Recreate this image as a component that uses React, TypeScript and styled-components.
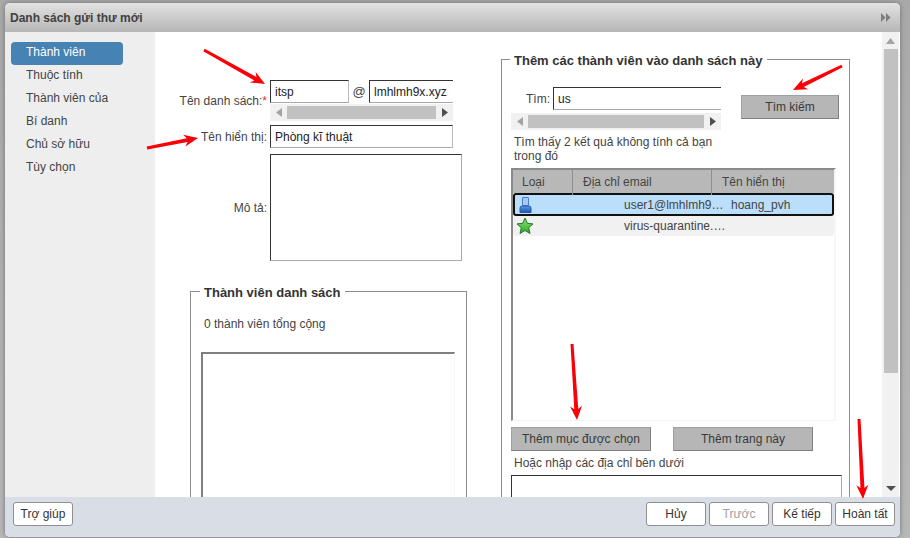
import React from "react";
import styled, { createGlobalStyle } from "styled-components";

const Global = createGlobalStyle`
  html, body { margin: 0; padding: 0; height: 538px; overflow: hidden; background: #b3b3b3; }
  #root { height: 538px; }
  * { box-sizing: border-box; }
  body { font-family: "Liberation Sans", Arial, sans-serif; font-size: 12px; color: #333; }
`;

const Page = styled.div`
  position: relative;
  width: 910px;
  height: 538px;
  padding: 3px 10px 1px 5px;
  overflow: hidden;
  background: linear-gradient(#a9a9a9, #b8b8b8);
`;
const Dialog = styled.div`
  display: flex;
  flex-direction: column;
  height: 534px;
  border-radius: 5px;
  overflow: hidden;
  background: #fff;
  box-shadow: 0 0 5px #6e6e6e;
`;
const TitleBar = styled.div`
  flex: none;
  height: 29px;
  display: flex;
  align-items: center;
  justify-content: space-between;
  padding: 0 9px 0 5px;
  background: linear-gradient(#e2e2e2, #b6b6b6);
  font-weight: bold;
  color: #404040;
`;
const Body = styled.div`
  flex: 1;
  min-height: 0;
  display: flex;
`;
const Sidebar = styled.nav`
  flex: none;
  width: 150px;
  padding: 10px 0 0 6px;
  background: #eeeeee;
`;
const NavItem = styled.div<{ $active?: boolean }>`
  width: 112px;
  height: 23px;
  line-height: 21px;
  padding-left: 15px;
  border-radius: 4px;
  background: ${(p) => (p.$active ? "#4682b4" : "transparent")};
  color: ${(p) => (p.$active ? "#fff" : "#444")};
`;
const Main = styled.main`
  flex: 1;
  min-width: 0;
  display: flex;
  overflow: hidden;
`;
const LeftCol = styled.section`
  flex: none;
  width: 312px;
  padding-top: 48px;
`;
const FormRow = styled.div<{ $gap?: number }>`
  display: flex;
  align-items: center;
  margin-top: ${(p) => p.$gap ?? 0}px;
`;
const Label = styled.label`
  flex: none;
  width: 112px;
  margin-right: 3px;
  text-align: right;
  color: #444;
`;
const Req = styled.span`
  color: #d33;
`;
const Fields = styled.div`
  width: 183px;
`;
const FieldLine = styled.div`
  display: flex;
  align-items: center;
`;
const Input = styled.div<{ $w: number; $open?: boolean }>`
  flex: none;
  width: ${(p) => p.$w}px;
  height: 23px;
  line-height: 23px;
  padding: 0 4px;
  border: 1px solid #333;
  border-color: #333 #bbb #aaa #333;
  ${(p) => (p.$open ? "border-right: none;" : "")}
  color: #222;
  white-space: nowrap;
  overflow: hidden;
  background: #fff;
`;
const At = styled.span`
  flex: none;
  width: 20px;
  text-align: center;
  font-size: 13px;
  color: #444;
`;
const TextArea = styled.div<{ $w: number; $h: number; $top?: number }>`
  flex: none;
  width: ${(p) => p.$w}px;
  height: ${(p) => p.$h}px;
  margin-top: ${(p) => p.$top ?? 0}px;
  border: 1px solid #333;
  border-color: #333 #aaa #aaa #333;
  background: #fff;
`;
const HScroll = styled.div<{ $w: number; $top: number }>`
  width: ${(p) => p.$w}px;
  height: 17px;
  margin-top: ${(p) => p.$top}px;
  display: flex;
  align-items: center;
  background: #f1f1f1;
`;
const HEnd = styled.div`
  flex: none;
  width: 17px;
  display: flex;
  justify-content: center;
`;
const HThumb = styled.div`
  flex: 1;
  height: 13px;
  background: #c1c1c1;
`;
const Fieldset = styled.fieldset`
  margin: 0;
  padding: 0;
  border: 1px solid #8c8c8c;
  min-width: 0;
`;
const LeftFieldset = styled(Fieldset)`
  margin: 22px 0 0 35px;
  width: 277px;
  height: 320px;
  padding: 0 11px 0 10px;
`;
const Legend = styled.legend`
  margin-left: -1px;
  padding: 0 4px;
  height: 16px;
  font-size: 13px;
  font-weight: bold;
  line-height: 19px;
  color: #333;
`;
const Total = styled.div`
  margin: 18px 0 0 3px;
  line-height: 15px;
  color: #444;
`;
const MemberBox = styled.div`
  margin-top: 20px;
  height: 200px;
  border-top: 2px solid #808080;
  border-left: 2px solid #808080;
  border-right: 1px solid #f7f7f7;
`;
const RightCol = styled.section`
  flex: none;
  width: 349px;
  margin-left: 34px;
  padding-top: 19px;
`;
const RightFieldset = styled(Fieldset)`
  height: 480px;
  padding: 0 0 0 9px;
`;
const SearchArea = styled.div`
  display: flex;
  align-items: flex-start;
`;
const SearchCol = styled.div`
  flex: none;
  width: 210px;
  padding-top: 20px;
`;
const SearchLabel = styled.label`
  flex: none;
  width: 42px;
  padding: 0 4px 0 15px;
  color: #444;
`;
const SearchBtnWrap = styled.div`
  margin: 28px 0 0 20px;
`;
const GreyButton = styled.div<{ $w: number }>`
  width: ${(p) => p.$w}px;
  height: 24px;
  line-height: 22px;
  text-align: center;
  background: #b6b6b6;
  border: 1px solid #8a8a8a;
  border-color: #a0a0a0 #808080 #808080 #a0a0a0;
  color: #3a3a3a;
`;
const Found = styled.p`
  margin: 5px 0 0 3px;
  width: 205px;
  line-height: 14px;
  color: #444;
`;
const List = styled.div`
  margin-top: 5px;
  width: 325px;
  height: 253px;
  border-top: 2px solid #8a8a8a;
  border-left: 2px solid #8a8a8a;
  border-right: 2px solid #f7f7f7;
  border-bottom: 1px solid #f3f3f3;
`;
const HeadRow = styled.div`
  display: grid;
  grid-template-columns: 59px 139px 123px;
  height: 23px;
  background: #b8b8b8;
  color: #444;
`;
const HeadCell = styled.div<{ $sep?: boolean }>`
  line-height: 25px;
  padding-left: ${(p) => (p.$sep ? 10 : 9)}px;
  border-left: ${(p) => (p.$sep ? "1px solid #8f8f8f" : "none")};
`;
const Row = styled.div<{ $selected?: boolean }>`
  display: grid;
  grid-template-columns: 59px 150px 112px;
  align-items: center;
  height: ${(p) => (p.$selected ? 23 : 20)}px;
  border-radius: 3px;
  background: ${(p) => (p.$selected ? "#bbdefb" : "#f1f1f1")};
  box-shadow: ${(p) => (p.$selected ? "inset 0 0 0 2px #111" : "none")};
  color: #444;
`;
const IconCell = styled.div`
  padding-left: 1px;
  display: flex;
  align-items: center;
`;
const EmailCell = styled.div`
  padding-left: 52px;
  white-space: nowrap;
`;
const NameCell = styled.div`
  padding-left: 9px;
  white-space: nowrap;
`;
const ActionRow = styled.div`
  display: flex;
  gap: 22px;
  margin-top: 6px;
`;
const OrText = styled.div`
  margin: 5px 0 0 3px;
  line-height: 14px;
  color: #444;
`;
const VScroll = styled.div`
  flex: none;
  width: 17px;
  margin-left: 32px;
  display: flex;
  flex-direction: column;
  align-items: center;
  background: #f1f1f1;
`;
const VEnd = styled.div`
  flex: none;
  height: 17px;
  display: flex;
  align-items: center;
  justify-content: center;
`;
const VThumb = styled.div`
  flex: none;
  width: 14px;
  height: 324px;
  background: #c1c1c1;
`;
const VSpacer = styled.div`
  flex: 1;
`;
const Footer = styled.footer`
  flex: none;
  height: 40px;
  display: flex;
  justify-content: space-between;
  padding: 5px 5px 0 8px;
  background: #d9dde5;
`;
const FooterGroup = styled.div`
  display: flex;
  gap: 3px;
`;
const FooterBtn = styled.div<{ $disabled?: boolean }>`
  width: 60px;
  height: 24px;
  line-height: 22px;
  text-align: center;
  background: #fff;
  border: 1px solid #8f8f8f;
  border-radius: 3px;
  color: ${(p) => (p.$disabled ? "#a0a0a0" : "#333")};
`;
const Arrows = styled.svg`
  position: absolute;
  left: 0;
  top: 0;
  width: 910px;
  height: 538px;
  pointer-events: none;
`;

const Tri = ({ dir, color = "#555" }: { dir: "l" | "r" | "u" | "d"; color?: string }) => {
  const pts = { l: "7,0 1,4.5 7,9", r: "1,0 7,4.5 1,9", u: "0,7 4.5,1 9,7", d: "0,1 10,1 5,6" }[dir];
  const vert = dir === "u" || dir === "d";
  return (
    <svg width={vert ? 10 : 8} height={vert ? 8 : 9} viewBox={vert ? "0 0 10 8" : "0 0 8 9"}>
      <polygon points={pts} fill={color} />
    </svg>
  );
};

const Scroll = ({ w, top }: { w: number; top: number }) => (
  <HScroll $w={w} $top={top}>
    <HEnd><Tri dir="l" color="#a3a3a3" /></HEnd>
    <HThumb />
    <HEnd><Tri dir="r" color="#505050" /></HEnd>
  </HScroll>
);

const UserIcon = () => (
  <svg width="13" height="16" viewBox="0 0 13 16" style={{ marginLeft: 5 }}>
    <defs>
      <linearGradient id="ub" x1="0" y1="0" x2="0" y2="1">
        <stop offset="0" stopColor="#5f98e6" />
        <stop offset="1" stopColor="#1c55b0" />
      </linearGradient>
    </defs>
    <rect x="3.5" y="0.5" width="6" height="8" rx="0.5" fill="#a9c8f3" stroke="#4a7fcc" />
    <path d="M1 15.5V11Q1 9 3 9H10Q12 9 12 11V15.5Z" fill="url(#ub)" stroke="#2a5aa8" />
  </svg>
);

const StarIcon = () => (
  <svg width="18" height="18" viewBox="0 0 18 18" style={{ marginLeft: 2 }}>
    <defs>
      <linearGradient id="sg" x1="0" y1="0" x2="0" y2="1">
        <stop offset="0" stopColor="#8fe37a" />
        <stop offset="1" stopColor="#2fa52a" />
      </linearGradient>
    </defs>
    <polygon
      points="9,1 11.3,6.3 17,6.9 12.7,10.7 14,16.5 9,13.5 4,16.5 5.3,10.7 1,6.9 6.7,6.3"
      fill="url(#sg)"
      stroke="#1f7a22"
      strokeWidth="1"
      strokeLinejoin="round"
    />
  </svg>
);

const Arrow = ({ x1, y1, x2, y2 }: { x1: number; y1: number; x2: number; y2: number }) => {
  const dx = x2 - x1;
  const dy = y2 - y1;
  const len = Math.hypot(dx, dy);
  const ux = dx / len;
  const uy = dy / len;
  const nx = -uy;
  const ny = ux;
  const at = (back: number, off: number) => `${x2 - ux * back + nx * off},${y2 - uy * back + ny * off}`;
  const tail = (off: number) => `${x1 + nx * off},${y1 + ny * off}`;
  const points = [
    tail(1.5),
    at(11, 2),
    at(14, 6),
    `${x2},${y2}`,
    at(14, -6),
    at(11, -2),
    tail(-1.5),
  ].join(" ");
  return <polygon points={points} fill="#fb0007" />;
};

export default function App() {
  return (
    <Page>
      <Global />
      <Dialog>
        <TitleBar>
          <span>Danh sách gửi thư mới</span>
          <svg width="10" height="9" viewBox="0 0 10 9">
            <polygon points="0,0 4.5,4.5 0,9" fill="#7d7d7d" />
            <polygon points="5,0 9.5,4.5 5,9" fill="#7d7d7d" />
          </svg>
        </TitleBar>
        <Body>
          <Sidebar>
            <NavItem $active>Thành viên</NavItem>
            <NavItem>Thuộc tính</NavItem>
            <NavItem>Thành viên của</NavItem>
            <NavItem>Bí danh</NavItem>
            <NavItem>Chủ sở hữu</NavItem>
            <NavItem>Tùy chọn</NavItem>
          </Sidebar>
          <Main>
            <LeftCol>
              <FormRow>
                <Label>Tên danh sách:<Req>*</Req></Label>
                <Fields>
                  <FieldLine>
                    <Input $w={79}>itsp</Input>
                    <At>@</At>
                    <Input $w={84} $open>lmhlmh9x.xyz</Input>
                  </FieldLine>
                  <Scroll w={183} top={1} />
                </Fields>
              </FormRow>
              <FormRow $gap={4}>
                <Label>Tên hiển thị:</Label>
                <Input $w={183}>Phòng kĩ thuật</Input>
              </FormRow>
              <FormRow $gap={6}>
                <Label>Mô tả:</Label>
                <TextArea $w={192} $h={107} />
              </FormRow>
              <LeftFieldset>
                <Legend>Thành viên danh sách</Legend>
                <Total>0 thành viên tổng cộng</Total>
                <MemberBox />
              </LeftFieldset>
            </LeftCol>
            <RightCol>
              <RightFieldset>
                <Legend>Thêm các thành viên vào danh sách này</Legend>
                <SearchArea>
                  <SearchCol>
                    <FieldLine>
                      <SearchLabel>Tìm:</SearchLabel>
                      <Input $w={168} $open>us</Input>
                    </FieldLine>
                    <Scroll w={210} top={3} />
                  </SearchCol>
                  <SearchBtnWrap>
                    <GreyButton $w={98}>Tìm kiếm</GreyButton>
                  </SearchBtnWrap>
                </SearchArea>
                <Found>Tìm thấy 2 kết quả không tính cả bạn trong đó</Found>
                <List>
                  <HeadRow>
                    <HeadCell>Loại</HeadCell>
                    <HeadCell $sep>Địa chỉ email</HeadCell>
                    <HeadCell $sep>Tên hiển thị</HeadCell>
                  </HeadRow>
                  <Row $selected>
                    <IconCell><UserIcon /></IconCell>
                    <EmailCell>user1@lmhlmh9…</EmailCell>
                    <NameCell>hoang_pvh</NameCell>
                  </Row>
                  <Row>
                    <IconCell><StarIcon /></IconCell>
                    <EmailCell>virus-quarantine.…</EmailCell>
                    <NameCell />
                  </Row>
                </List>
                <ActionRow>
                  <GreyButton $w={140}>Thêm mục được chọn</GreyButton>
                  <GreyButton $w={140}>Thêm trang này</GreyButton>
                </ActionRow>
                <OrText>Hoặc nhập các địa chỉ bên dưới</OrText>
                <TextArea $w={331} $h={60} $top={5} />
              </RightFieldset>
            </RightCol>
            <VScroll>
              <VEnd><Tri dir="u" color="#a3a3a3" /></VEnd>
              <VThumb />
              <VSpacer />
              <VEnd><Tri dir="d" color="#505050" /></VEnd>
            </VScroll>
          </Main>
        </Body>
        <Footer>
          <FooterBtn>Trợ giúp</FooterBtn>
          <FooterGroup>
            <FooterBtn>Hủy</FooterBtn>
            <FooterBtn $disabled>Trước</FooterBtn>
            <FooterBtn>Kế tiếp</FooterBtn>
            <FooterBtn>Hoàn tất</FooterBtn>
          </FooterGroup>
        </Footer>
      </Dialog>
      <Arrows viewBox="0 0 910 538">
        <Arrow x1={204} y1={50} x2={265} y2={84} />
        <Arrow x1={147} y1={148} x2={198} y2={138} />
        <Arrow x1={842} y1={66} x2={793} y2={90} />
        <Arrow x1={572} y1={344} x2={577} y2={420} />
        <Arrow x1={859} y1={419} x2={863} y2={499} />
      </Arrows>
    </Page>
  );
}
